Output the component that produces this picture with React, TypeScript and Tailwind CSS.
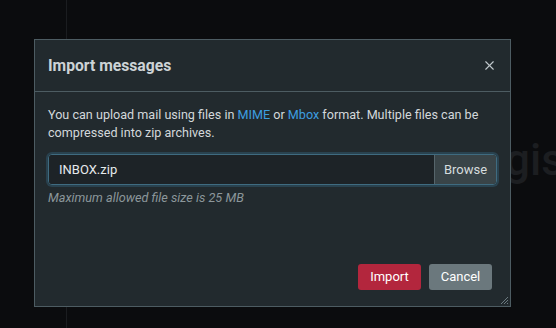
import { X } from 'lucide-react';

export default function App() {
  return (
    <div className="relative w-[556px] h-[328px] overflow-hidden bg-[#0b0c0e] font-['Roboto',sans-serif]">
      {/* page behind the modal */}
      <div className="flex h-full">
        <div className="w-[67px] shrink-0 border-r border-[#1b1d20]" />
        <div className="flex-1 pt-[138px] pl-[438px]">
          <span className="block text-[44px] leading-none font-medium text-[#1c1e21] whitespace-nowrap">gis</span>
        </div>
      </div>

      {/* modal */}
      <div className="absolute left-[34px] top-[39px] w-[477px] h-[268px] flex flex-col border border-[#4d5c62] bg-[#222a2e]">
        <div className="flex items-center justify-between h-[52px] shrink-0 border-b border-[#4d5c62] pl-[13px] pr-[13px]">
          <h2 className="text-[15.7px] font-bold text-[#cdd3d6]">Import messages</h2>
          <X className="w-[15px] h-[15px] text-[#c0c8cc]" strokeWidth={1.8} />
        </div>
        <div className="flex-1 px-[13px] pt-[14px]">
          <p className="text-[12.6px] leading-[18px] text-[#d3d8db]">
            You can upload mail using files in <span className="text-[#3d9ee0]">MIME</span> or{' '}
            <span className="text-[#3d9ee0]">Mbox</span> format. Multiple files can be compressed into zip archives.
          </p>
          <div className="mt-[12px] flex h-[31px] rounded-[4px] border border-[#3f6b80] shadow-[0_0_0_2px_rgba(52,96,120,0.45)] overflow-hidden">
            <div className="flex-1 flex items-center pl-[10px] bg-[#1d2327] text-[13px] text-[#e6eaec]">INBOX.zip</div>
            <div className="flex items-center w-[62px] justify-center bg-[#394448] border-l border-[#56656b] text-[13px] text-[#d6dcde]">Browse</div>
          </div>
          <p className="mt-[3px] text-[12.7px] italic text-[#8c979b]">Maximum allowed file size is 25 MB</p>
        </div>
        <div className="relative flex justify-end gap-[8px] pr-[18px] pb-[16px]">
          <button className="w-[63px] h-[26px] rounded-[3px] bg-[#b3263d] text-[13px] text-white">Import</button>
          <button className="w-[63px] h-[26px] rounded-[3px] bg-[#6b787d] text-[13px] text-white">Cancel</button>
          <svg className="absolute right-[1px] bottom-[1px]" width="9" height="9" viewBox="0 0 9 9">
            <path d="M8 1L1 8M8 4L4 8M8 7L7 8" stroke="#6c7a80" strokeWidth="1" />
          </svg>
        </div>
      </div>
    </div>
  );
}
